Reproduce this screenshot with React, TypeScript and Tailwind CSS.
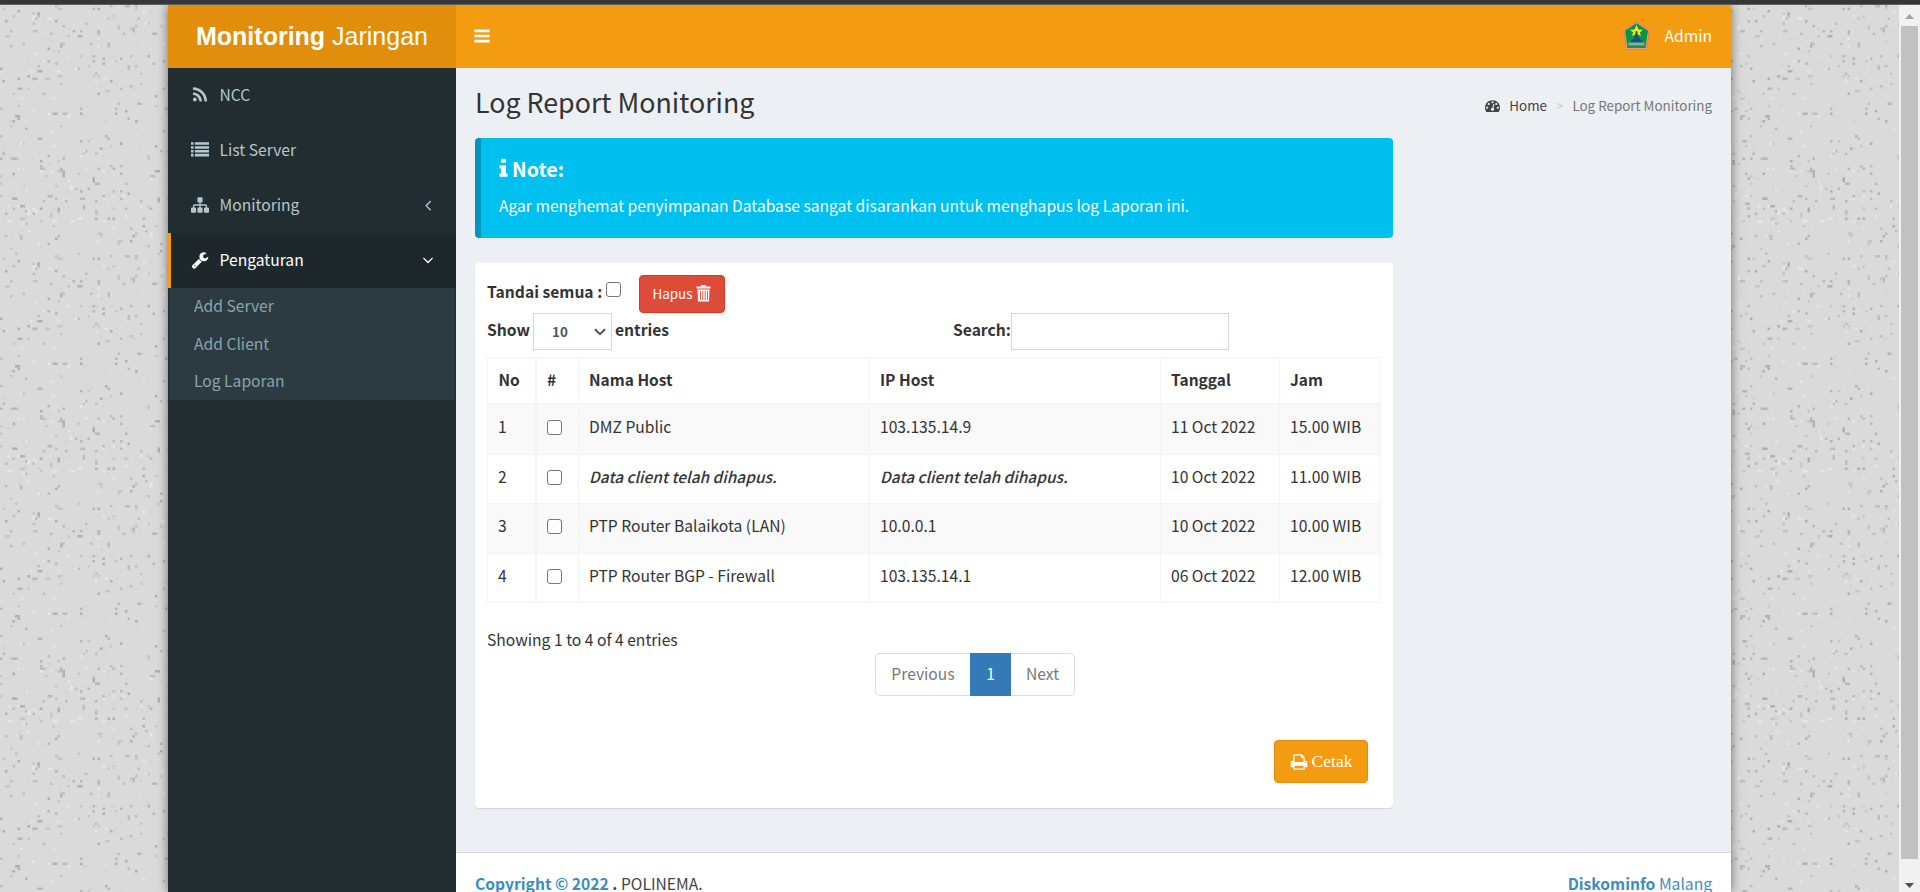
import React from "react";

const ICONS = {
  bars: "M1664 1344v128q0 26-19 45t-45 19h-1408q-26 0-45-19t-19-45v-128q0-26 19-45t45-19h1408q26 0 45 19t19 45zm0-512v128q0 26-19 45t-45 19h-1408q-26 0-45-19t-19-45v-128q0-26 19-45t45-19h1408q26 0 45 19t19 45zm0-512v128q0 26-19 45t-45 19h-1408q-26 0-45-19t-19-45v-128q0-26 19-45t45-19h1408q26 0 45 19t19 45z",
  left: "M1203 544q0 13-10 23l-393 393 393 393q10 10 10 23t-10 23l-50 50q-10 10-23 10t-23-10l-466-466q-10-10-10-23t10-23l466-466q10-10 23-10t23 10l50 50q10 10 10 23z",
  down: "M1395 736q0 13-10 23l-466 466q-10 10-23 10t-23-10l-466-466q-10-10-10-23t10-23l50-50q10-10 23-10t23 10l393 393 393-393q10-10 23-10t23 10l50 50q10 10 10 23z",
  rss: "M576 1344q0 80-56 136t-136 56-136-56-56-136 56-136 136-56 136 56 56 136zm512 123q2 28-17 48-18 21-47 21h-135q-25 0-43-16.5t-20-41.5q-22-229-184.5-391.5t-391.5-184.5q-25-2-41.5-20t-16.5-43v-135q0-29 21-47 17-17 43-17h5q160 13 306 80.5t259 181.5q114 113 181.5 259t80.5 306zm512 2q2 27-18 47-18 20-46 20h-143q-26 0-44.5-17.5t-19.5-42.5q-12-215-101-408.5t-231.5-336-336-231.5-408.5-102q-25-1-42.5-19.5t-17.5-43.5v-143q0-28 20-46 18-18 44-18h3q262 13 501.5 120t425.5 294q187 186 294 425.5t120 501.5z",
  list: "M0 1280h256v256h-256zM0 896h256v256h-256zM0 512h256v256h-256zM0 128h256v256h-256zM384 1280h1408v256h-1408zM384 896h1408v256h-1408zM384 512h1408v256h-1408zM384 128h1408v256h-1408z",
  sitemap: "M1792 1248v320q0 40-28 68t-68 28h-320q-40 0-68-28t-28-68v-320q0-40 28-68t68-28h96v-192h-512v192h96q40 0 68 28t28 68v320q0 40-28 68t-68 28h-320q-40 0-68-28t-28-68v-320q0-40 28-68t68-28h96v-192h-512v192h96q40 0 68 28t28 68v320q0 40-28 68t-68 28h-320q-40 0-68-28t-28-68v-320q0-40 28-68t68-28h96v-192q0-52 38-90t90-38h512v-192h-96q-40 0-68-28t-28-68v-320q0-40 28-68t68-28h320q40 0 68 28t28 68v320q0 40-28 68t-68 28h-96v192h512q52 0 90 38t38 90v192h96q40 0 68 28t28 68z",
  wrench: "M448 1472q0-26-19-45t-45-19-45 19-19 45 19 45 45 19 45-19 19-45zm644-420l-682 682q-37 37-90 37-52 0-91-37l-106-108q-38-36-38-90 0-53 38-91l681-681q39 98 114.5 173.5t173.5 114.5zm634-435q0 39-23 106-47 134-164.5 217.5t-258.5 83.5q-185 0-316.5-131.5t-131.5-316.5 131.5-316.5 316.5-131.5q58 0 121.5 16.5t107.5 46.5q16 11 16 28t-16 28l-293 169v224l193 107q5-3 79-48.5t135.5-81 70.5-35.5q15 0 23.5 10t8.5 25z",
  info: "M1216 1344v128q0 26-19 45t-45 19h-512q-26 0-45-19t-19-45v-128q0-26 19-45t45-19h64v-384h-64q-26 0-45-19t-19-45v-128q0-26 19-45t45-19h384q26 0 45 19t19 45v576h64q26 0 45 19t19 45zm-128-1152v192q0 26-19 45t-45 19h-256q-26 0-45-19t-19-45v-192q0-26 19-45t45-19h256q26 0 45 19t19 45z",
  print: "M448 1536h896v-256h-896v256zm0-640h896v-384h-160q-40 0-68-28t-28-68v-160h-640v640zm1152 64q0-26-19-45t-45-19-45 19-19 45 19 45 45 19 45-19 19-45zm128 0v416q0 13-9.5 22.5t-22.5 9.5h-224v160q0 40-28 68t-68 28h-960q-40 0-68-28t-28-68v-160h-224q-13 0-22.5-9.5t-9.5-22.5v-416q0-79 56.5-135.5t135.5-56.5h64v-544q0-40 28-68t68-28h672q40 0 88 20t76 48l152 152q28 28 48 76t20 88v256h64q79 0 135.5 56.5t56.5 135.5z",
  dashboard: "M384 1152q0-53-37.5-90.5t-90.5-37.5-90.5 37.5-37.5 90.5 37.5 90.5 90.5 37.5 90.5-37.5 37.5-90.5zm192-448q0-53-37.5-90.5t-90.5-37.5-90.5 37.5-37.5 90.5 37.5 90.5 90.5 37.5 90.5-37.5 37.5-90.5zm428 481l101-382q6-26-7.5-48.5t-38.5-29.5-48 6.5-30 39.5l-101 382q-60 5-107 43.5t-63 98.5q-20 77 20 146t117 89 146-20 89-117q16-60-6-117t-72-91zm660-33q0-53-37.5-90.5t-90.5-37.5-90.5 37.5-37.5 90.5 37.5 90.5 90.5 37.5 90.5-37.5 37.5-90.5zm-640-640q0-53-37.5-90.5t-90.5-37.5-90.5 37.5-37.5 90.5 37.5 90.5 90.5 37.5 90.5-37.5 37.5-90.5zm448 192q0-53-37.5-90.5t-90.5-37.5-90.5 37.5-37.5 90.5 37.5 90.5 90.5 37.5 90.5-37.5 37.5-90.5zm320 448q0 261-141 483-19 29-54 29h-1402q-35 0-54-29-141-221-141-483 0-182 71-348t191-286 286-191 348-71 348 71 286 191 191 286 71 348z",
};

function Icon({ name, className }: { name: keyof typeof ICONS; className: string }) {
  return (
    <svg viewBox="0 0 1792 1792" fill="currentColor" className={className} aria-hidden="true">
      <path d={ICONS[name]} />
    </svg>
  );
}

function Trash() {
  return (
    <svg viewBox="0 0 15 17" fill="currentColor" className="h-[17px] w-[15px] shrink-0" aria-hidden="true">
      <path d="M5 0h5v1.5h4.5v2H.5v-2H5zM1.5 4.5h12L13 16.5H2zM4 6v9h.9V6zm2.3 0v9h.9V6zm2.4 0v9h.9V6zM11 6v9h.9V6z" fillRule="evenodd" />
    </svg>
  );
}

function Emblem() {
  return (
    <svg viewBox="0 0 27 29" className="h-[29px] w-[27px]" aria-hidden="true">
      <path d="M13.5.5 26.3 9 23.8 28.3H3.2L.7 9z" fill="#f0a58a" stroke="#e8774f" strokeWidth="1" />
      <path d="M13.5 2 25 9.7 22.6 26.3H4.4L2 9.7z" fill="#0a9247" />
      <path d="M13.5 3.6 15.4 8.6 20 8.8 16.8 11.4 18 15 13.5 13 9 15 10.2 11.4 7 8.8 11.6 8.6z" fill="#f4ec1b" />
      <path d="M12.8 10h1.4l1 6 5 5.5H6.8l5-5.5z" fill="#17517c" />
      <path d="M5.5 21.5h16v3h-16z" fill="#8fa9a0" />
      <path d="M4.2 26.5h18.6" stroke="#d8382c" strokeWidth="1" />
    </svg>
  );
}

type Speck = { x: number; y: number; w: number; h: number; fill: string };

function makeSpecks(): Speck[] {
  let seed = 20221;
  const next = () => {
    seed = (seed + 0x6d2b79f5) | 0;
    let t = Math.imul(seed ^ (seed >>> 15), 1 | seed);
    t = (t + Math.imul(t ^ (t >>> 7), 61 | t)) ^ t;
    return ((t ^ (t >>> 14)) >>> 0) / 4294967296;
  };
  const darks = ["#b0b0b0", "#b8b8b8", "#bebebe", "#c6c6c6"];
  const out: Speck[] = [];
  for (let i = 0; i < 620; i++) {
    const x = Math.floor(next() * 100) * 2.5;
    const y = Math.floor(next() * 100) * 2.5;
    const kind = next();
    const shape = next();
    const fill =
      kind < 0.6 ? darks[Math.floor(next() * 4)] : kind < 0.75 ? "#e6e6e6" : "#d4d4d4";
    out.push({ x, y, w: shape < 0.1 ? 5 : 2.5, h: shape > 0.9 ? 5 : 2.5, fill });
  }
  return out;
}

const SPECKS = makeSpecks();

function Texture() {
  return (
    <svg className="absolute inset-0 h-full w-full" aria-hidden="true">
      <defs>
        <pattern id="specks" width="250" height="250" patternUnits="userSpaceOnUse">
          <rect width="250" height="250" fill="#dadada" />
          {SPECKS.map((s, i) => (
            <rect key={i} x={s.x} y={s.y} width={s.w} height={s.h} fill={s.fill} />
          ))}
        </pattern>
      </defs>
      <rect width="100%" height="100%" fill="url(#specks)" />
    </svg>
  );
}

const MENU: { icon: keyof typeof ICONS; label: string; arrow?: boolean }[] = [
  { icon: "rss", label: "NCC" },
  { icon: "list", label: "List Server" },
  { icon: "sitemap", label: "Monitoring", arrow: true },
];

function Sidebar() {
  return (
    <aside className="w-[288px] shrink-0 bg-[#222d32] text-[#b8c7ce]">
      <ul>
        {MENU.map((m) => (
          <li key={m.label} className="flex h-[55px] items-center pr-[19px] pb-[2px] pl-[22.5px]">
            <Icon name={m.icon} className="mr-[11px] h-[18px] w-[18px]" />
            <span>{m.label}</span>
            {m.arrow && <Icon name="left" className="ml-auto h-[18px] w-[18px]" />}
          </li>
        ))}
        <li>
          <div className="flex h-[55px] items-center border-l-[3px] border-[#f39c12] bg-[#1e282c] pr-[19px] pb-[2px] pl-[19.5px] text-white">
            <Icon name="wrench" className="mr-[11px] h-[18px] w-[18px]" />
            <span>Pengaturan</span>
            <Icon name="down" className="ml-auto h-[18px] w-[18px]" />
          </div>
          <ul className="mx-px bg-[#2c3b41] text-[#8aa4af]">
            {["Add Server", "Add Client", "Log Laporan"].map((s) => (
              <li key={s} className="flex h-[37.4px] items-center pb-[2px] pl-[25px]">
                {s}
              </li>
            ))}
          </ul>
        </li>
      </ul>
    </aside>
  );
}

function Check() {
  return <input type="checkbox" className="block h-[15px] w-[15px] appearance-none rounded-[3px] border border-[#767676] bg-white" />;
}

const ROWS = [
  { no: 1, host: "DMZ Public", ip: "103.135.14.9", date: "11 Oct 2022", time: "15.00 WIB", h: "h-[50px] bg-[#f9f9f9]" },
  { no: 2, host: null, ip: null, date: "10 Oct 2022", time: "11.00 WIB", h: "h-[49px]" },
  { no: 3, host: "PTP Router Balaikota (LAN)", ip: "10.0.0.1", date: "10 Oct 2022", time: "10.00 WIB", h: "h-[50px] bg-[#f9f9f9]" },
  { no: 4, host: "PTP Router BGP - Firewall", ip: "103.135.14.1", date: "06 Oct 2022", time: "12.00 WIB", h: "h-[49px]" },
];

const Deleted = () => <em className="text-[15.45px] font-medium italic">Data client telah dihapus.</em>;

function LogTable() {
  const cell = "border-r border-b border-[#f4f4f4] pl-[10px] align-top pt-[9px]";
  const head = "border-r border-b-2 border-[#f4f4f4] pl-[10px] text-left align-top pt-[9px] text-[15.5px] font-bold";
  return (
    <table className="w-[894px] table-fixed border-separate border-spacing-0 border-t border-l border-[#f4f4f4]">
      <colgroup>
        <col className="w-[49px]" />
        <col className="w-[42px]" />
        <col className="w-[291px]" />
        <col className="w-[291px]" />
        <col className="w-[119px]" />
        <col className="w-[101px]" />
      </colgroup>
      <thead>
        <tr className="h-[47px]">
          <th className="border-r-2 border-b-2 border-[#f4f4f4] pt-[9px] pl-[10.5px] text-left align-top text-[15.5px] font-bold">No</th>
          <th className={head}>#</th>
          <th className={head}>Nama Host</th>
          <th className={head}>IP Host</th>
          <th className={head}>Tanggal</th>
          <th className={head}>Jam</th>
        </tr>
      </thead>
      <tbody>
        {ROWS.map((r) => (
          <tr key={r.no} className={r.h}>
            <td className="border-r-2 border-b border-[#f4f4f4] pt-[9px] pl-[10px] align-top">{r.no}</td>
            <td className="border-r border-b border-[#f4f4f4] pt-[15px] pl-[10px] align-top">
              <Check />
            </td>
            <td className={cell}>{r.host ?? <Deleted />}</td>
            <td className={cell}>{r.ip ?? <Deleted />}</td>
            <td className={cell}>{r.date}</td>
            <td className={cell}>{r.time}</td>
          </tr>
        ))}
      </tbody>
    </table>
  );
}

function LogBox() {
  return (
    <section className="mt-[25px] h-[545px] w-[918px] rounded-[4px] bg-white pt-3 pl-3 shadow-[0_1px_1px_rgba(0,0,0,0.12)]">
      <div className="flex h-[38px]">
        <span className="w-[119px] pt-[4px] font-bold whitespace-nowrap">Tandai semua :</span>
        <div className="pt-[7px]">
          <Check />
        </div>
        <button className="ml-[18px] flex h-[38px] w-[86px] items-center justify-center gap-1 rounded-[4px] border border-[#d73925] bg-[#dd4b39] pb-[2px] text-[13.4px] text-white">
          <span>Hapus</span>
          <Trash />
        </button>
      </div>
      <div className="flex h-[37px] font-bold">
        <span className="w-[46px] pt-[4px]">Show</span>
        <div className="flex h-[37px] w-[79px] items-center justify-between border border-[#d2d6de] pr-[5px] pl-[18px] text-[13.4px] text-[#555]">
          <span>10</span>
          <svg viewBox="0 0 12 8" className="h-[8px] w-[12px]" aria-hidden="true">
            <path d="M1 1.2 6 6.2 11 1.2" fill="none" stroke="#555" strokeWidth="2" />
          </svg>
        </div>
        <span className="w-[337px] pt-[4px] pl-[3px]">entries</span>
        <span className="w-[62px] pt-[4px] pl-[4px]">Search:</span>
        <input className="h-[37px] w-[218px] border border-[#d2d6de] bg-white" />
      </div>
      <div className="mt-[7px]">
        <LogTable />
      </div>
      <p className="mt-[24px] mb-px">Showing 1 to 4 of 4 entries</p>
      <div className="flex h-[43px] pl-[388px] text-[#777]">
        <span className="flex w-[95px] items-center justify-center rounded-l-[5px] border border-r-0 border-[#ddd] pb-[2px]">Previous</span>
        <span className="flex w-[41px] items-center justify-center bg-[#337ab7] pb-[2px] text-white">1</span>
        <span className="flex w-[64px] items-center justify-center rounded-r-[5px] border border-l-0 border-[#ddd] pb-[2px]">Next</span>
      </div>
      <div className="mt-[44px] flex justify-end pr-[25px]">
        <button className="flex h-[43px] w-[94px] items-center justify-center gap-1 rounded-[4px] border border-[#e08e0b] bg-[#f39c12] font-['Liberation_Serif',serif] text-[17.5px] text-white">
          <Icon name="print" className="h-[18px] w-[18px]" />
          <span>Cetak</span>
        </button>
      </div>
    </section>
  );
}

function Scrollbar() {
  return (
    <div className="flex w-[21px] shrink-0 flex-col items-center bg-[#f1f1f1]">
      <svg viewBox="0 0 21 21" className="h-[21px] w-[21px]" aria-hidden="true">
        <path d="M6 14h9l-4.5-5z" fill="#a3a3a3" />
      </svg>
      <div className="h-[833px] w-[17px] bg-[#c1c1c1]" />
      <svg viewBox="0 0 21 21" className="mt-[12px] h-[21px] w-[21px]" aria-hidden="true">
        <path d="M6 12h9l-4.5 5z" fill="#505050" />
      </svg>
    </div>
  );
}

export default function App() {
  return (
    <div className="flex h-[892px] w-[1920px] flex-col overflow-hidden font-['Noto_Sans_CJK_SC',sans-serif] text-[15.65px] leading-[25px] text-[#333]">
      <div className="h-[5px] shrink-0 border-b border-[#5f6064] bg-[#35363a]" />
      <div className="flex h-[887px]">
        <div className="relative flex flex-1 overflow-hidden pl-[168px]">
          <Texture />
          <div className="relative flex h-[887px] w-[1563px] flex-col bg-[#ecf0f5] shadow-[0_0_10px_rgba(0,0,0,0.5)]">
            <header className="flex h-[63px] shrink-0 bg-[#f39c12] text-white">
              <div className="flex w-[288px] items-center justify-center bg-[#e08e0b] pb-px font-['Liberation_Sans',sans-serif] text-[25px]">
                <span className="whitespace-pre">
                  <b>Monitoring</b> Jaringan
                </span>
              </div>
              <div className="flex flex-1 items-center pr-[19px] pb-[2px] pl-[17px]">
                <Icon name="bars" className="h-[18px] w-[18px]" />
                <div className="ml-auto flex items-center gap-[14px]">
                  <Emblem />
                  <span>Admin</span>
                </div>
              </div>
            </header>
            <div className="flex flex-1">
              <Sidebar />
              <div className="flex flex-1 flex-col">
                <main className="h-[784px] shrink-0 px-[19px]">
                  <div className="flex h-[70px] justify-between">
                    <h1 className="pt-[17px] text-[26.8px] leading-[33px]">Log Report Monitoring</h1>
                    <nav className="mt-[25px] flex h-[25px] items-center self-start text-[13.4px] text-[#777]">
                      <Icon name="dashboard" className="mr-[9px] h-[15px] w-[15px] text-[#444]" />
                      <span className="text-[#444]">Home</span>
                      <span className="px-[9px] text-[#ccc]">&gt;</span>
                      <span>Log Report Monitoring</span>
                    </nav>
                  </div>
                  <section className="h-[100px] w-[918px] rounded-[4px] border-l-[6px] border-[#0097bc] bg-[#00c0ef] pt-[18px] pl-[18px] text-white">
                    <h4 className="flex items-center text-[19.6px] font-bold">
                      <Icon name="info" className="-ml-[7px] -mr-[3px] h-[23px] w-[23px]" />
                      Note:
                    </h4>
                    <p className="mt-[12px]">Agar menghemat penyimpanan Database sangat disarankan untuk menghapus log Laporan ini.</p>
                  </section>
                  <LogBox />
                </main>
                <footer className="flex flex-1 justify-between border-t border-[#d2d6de] bg-white px-[19px] pt-[18px] text-[#444]">
                  <span>
                    <b><span className="text-[#3c8dbc]">Copyright © 2022</span> .</b> POLINEMA.
                  </span>
                  <span className="text-[#3c8dbc]">
                    <b>Diskominfo</b> Malang
                  </span>
                </footer>
              </div>
            </div>
          </div>
        </div>
        <Scrollbar />
      </div>
    </div>
  );
}
